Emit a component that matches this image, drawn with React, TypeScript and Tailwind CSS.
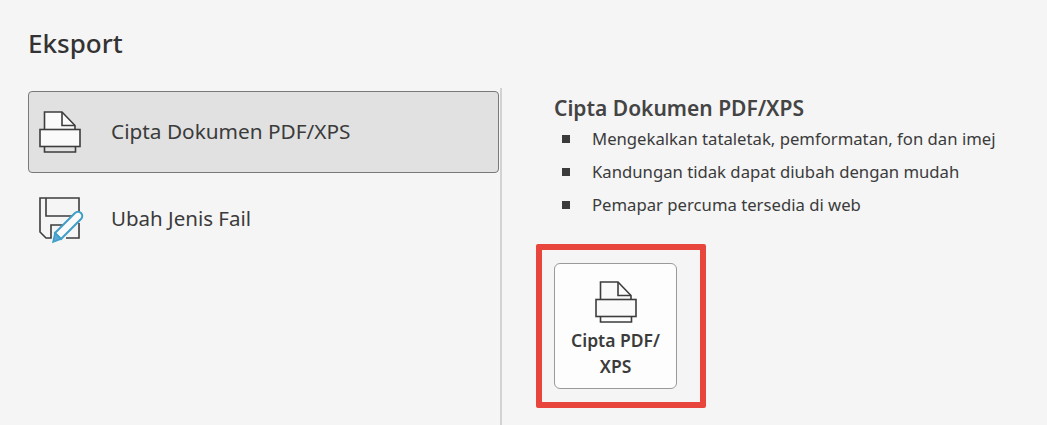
import React from "react";

function PrinterIcon({ className }: { className?: string }) {
  return (
    <svg className={className} viewBox="0 0 42 42" fill="none" stroke="#3d3d3d" strokeWidth="1.6">
      <path d="M5.5 19V1h17.5l13 13.5V19" fill="#fafafa" />
      <path d="M23 1v13.5h13" />
      <rect x="1" y="18.5" width="40" height="17" fill="#fafafa" />
      <path d="M5.5 35.5v5.5h31v-5.5" />
    </svg>
  );
}

function SaveAsIcon({ className }: { className?: string }) {
  return (
    <svg className={className} viewBox="0 0 46 48" fill="none">
      <path d="M40 16V1H1v34l6 6h5V28h16M40 26v15H27" stroke="#3d3d3d" strokeWidth="1.6" />
      <path d="M7 1v18h26" stroke="#3d3d3d" strokeWidth="1.6" />
      <path d="M16 36 36 16a4.2 4.2 0 0 1 6 0 4.2 4.2 0 0 1 0 6L22 42z" fill="#fafafa" stroke="#3f9fc6" strokeWidth="2" />
      <path d="M16 36l6 6-8 3z" fill="#5aa9d6" stroke="#3f9fc6" strokeWidth="1.5" />
    </svg>
  );
}

const points = [
  "Mengekalkan tataletak, pemformatan, fon dan imej",
  "Kandungan tidak dapat diubah dengan mudah",
  "Pemapar percuma tersedia di web",
];

export default function App() {
  return (
    <div className="w-[1047px] h-[425px] overflow-hidden bg-[#f5f5f5] text-[#3b3b3b] font-['Noto_Sans','Open_Sans',sans-serif]">
      <h1 className="pl-[28px] pt-[26px] h-[88px] text-[26px] leading-[34px] font-medium text-[#333]">Eksport</h1>
      <div className="flex">
        <div className="w-[502px] shrink-0 border-r-2 border-[#d2d2d2] h-[337px] pl-[28px] pr-[1px] pt-[3px]">
          <div className="h-[82px] flex items-center rounded-[4px] border border-[#7a7a7a] bg-[#e1e1e1]">
            <PrinterIcon className="w-[42px] h-[42px] ml-[10px]" />
            <span className="ml-[30px] text-[20.8px] text-[#3b3b3b]">Cipta Dokumen PDF/XPS</span>
          </div>
          <div className="h-[90px] flex items-center">
            <SaveAsIcon className="w-[46px] h-[48px] ml-[11px] mt-[6px]" />
            <span className="ml-[26px] text-[20.5px] text-[#3b3b3b]">Ubah Jenis Fail</span>
          </div>
        </div>
        <div className="flex-1 pl-[34px]">
          <div className="pl-[18px] pt-[6px]">
            <h2 className="text-[21px] leading-[28px] font-semibold text-[#444]">Cipta Dokumen PDF/XPS</h2>
            <ul>
              {points.map((p) => (
                <li key={p} className="h-[33px] flex items-center text-[16.7px]">
                  <span className="w-[8px] h-[8px] ml-[8px] mr-[22px] bg-[#3b3b3b]" />
                  {p}
                </li>
              ))}
            </ul>
          </div>
          <div className="mt-[23px] w-[170px] h-[164px] border-[6px] border-[#e8463c] rounded-[2px] pl-[12px] pt-[13px]">
            <div className="w-[123px] h-[126px] rounded-[6px] border border-[#9a9a9a] bg-[#fdfdfd] flex flex-col items-center pt-[17px]">
              <PrinterIcon className="w-[42px] h-[42px]" />
              <span className="mt-[4px] text-center text-[17.5px] leading-[26px] font-semibold text-[#3b3b3b]">
                Cipta PDF/
                <br />
                XPS
              </span>
            </div>
          </div>
        </div>
      </div>
    </div>
  );
}
